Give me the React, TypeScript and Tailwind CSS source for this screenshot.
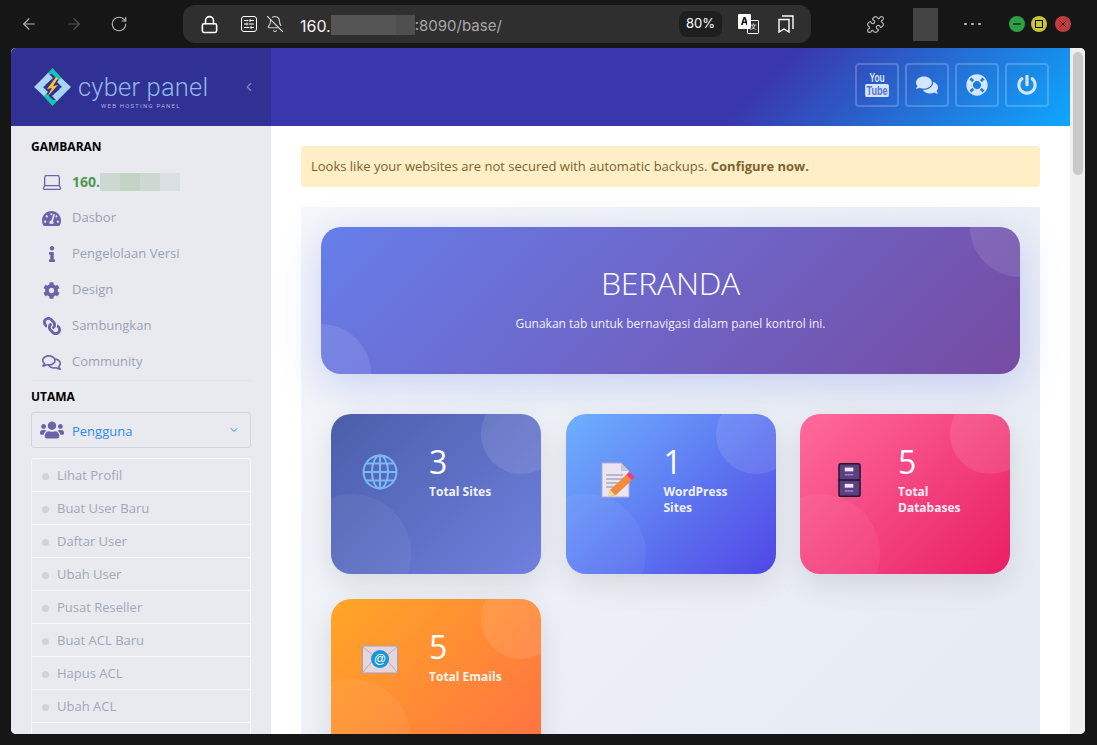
import { ArrowLeft, ArrowRight, RotateCw, Lock, BellOff, SlidersHorizontal, Puzzle, ChevronLeft, ChevronDown, Laptop, Minus, X } from 'lucide-react';
import { FaTachometerAlt, FaInfo, FaCog, FaLink, FaRegComments, FaUsers, FaComments, FaLifeRing, FaPowerOff } from 'react-icons/fa';

const overview = [
  { label: 'Dasbor', Icon: FaTachometerAlt, size: 'w-[19px] h-[19px]' },
  { label: 'Pengelolaan Versi', Icon: FaInfo, size: 'w-[16px] h-[16px]' },
  { label: 'Design', Icon: FaCog, size: 'w-[17px] h-[17px]' },
  { label: 'Sambungkan', Icon: FaLink, size: 'w-[18px] h-[18px] -scale-x-100' },
  { label: 'Community', Icon: FaRegComments, size: 'w-[19px] h-[19px]' },
];

const subItems = ['Lihat Profil', 'Buat User Baru', 'Daftar User', 'Ubah User', 'Pusat Reseller', 'Buat ACL Baru', 'Hapus ACL', 'Ubah ACL'];

function Logo() {
  return (
    <svg width="37" height="38" viewBox="0 0 37 38">
      <polygon points="12,7 18.5,0 36,19 30,25 25,20 31,19 18,6" fill="#17c4b0" />
      <polygon points="25,31 18.5,38 1,19 7,13 12,18 6,19 19,32" fill="#17c4b0" />
      <polygon points="0,19 14,5 19,10 9,19 14,24 10,28" fill="#a9d4f5" />
      <polygon points="37,19 23,33 18,28 28,19 23,14 27,10" fill="#a9d4f5" />
      <polygon points="22,9 13,21 18,20 13,29 24,17 19,18 24,10" fill="#fbc531" />
    </svg>
  );
}

function HeaderButton({ children }: { children: React.ReactNode }) {
  return <div className="w-[44px] h-[44px] rounded border-2 border-white/20 flex items-center justify-center text-[#d5e6fb]">{children}</div>;
}

function GlobeIcon() {
  return (
    <svg width="36" height="36" viewBox="0 0 36 36" fill="none" stroke="#79b9f4" strokeWidth="2">
      <circle cx="18" cy="18" r="16.500" />
      <ellipse cx="18" cy="18" rx="8" ry="16.500" />
      <path d="M18 1.500v33M1.500 18h33M4 9.500h28M4 26.500h28" />
    </svg>
  );
}

function DocIcon() {
  return (
    <svg width="36" height="36" viewBox="0 0 36 36" className="translate-x-[3px]">
      <path d="M2 1h19l8 8v26H2z" fill="#e9e6f2" stroke="#b3aec6" />
      <path d="M21 1v8h8z" fill="#c9c6d6" />
      <path d="M6 13h17M6 17h17M6 21h14M6 25h8" stroke="#8d8aa3" strokeWidth="1" />
      <path d="M8 35l2-7L26 13l6 5-16 15z" fill="#f28b3c" />
      <path d="M26 13l3-3 6 5-3 3z" fill="#ec3e78" />
      <path d="M8 35l2-7 5 5z" fill="#f6d7a7" />
    </svg>
  );
}

function CabinetIcon() {
  return (
    <svg width="23" height="36" viewBox="0 0 24 36">
      <rect x="1" y="1" width="22" height="34" rx="2" fill="#5b3f7e" stroke="#20152d" strokeWidth="1.5" />
      <path d="M1 18h22" stroke="#20152d" strokeWidth="1.5" />
      <rect x="7" y="5" width="9" height="4" fill="#ede5f2" />
      <rect x="7" y="22" width="9" height="4" fill="#ede5f2" />
      <path d="M7 12.500h9M7 29.500h9" stroke="#a779d6" strokeWidth="1.500" />
    </svg>
  );
}

function MailIcon() {
  return (
    <svg width="36" height="30" viewBox="0 0 36 30" className="translate-y-[3px]">
      <rect x="0.500" y="1" width="35" height="27" fill="#e6d5da" stroke="#a7a0ae" />
      <path d="M1 2l17 14L35 2M1 27l12-14M35 27L23 13" fill="none" stroke="#bca9b3" />
      <circle cx="18" cy="14" r="9" fill="#1796d8" />
      <text x="18" y="18" textAnchor="middle" fontSize="12" fill="#fff" fontFamily="Liberation Sans, sans-serif">@</text>
    </svg>
  );
}

function StatCard({ bg, icon, value, label }: { bg: string; icon: React.ReactNode; value: string; label: string }) {
  return (
    <div className={`relative h-[160px] rounded-[20px] overflow-hidden shadow-[0_10px_30px_rgba(0,0,0,0.1)] text-white ${bg}`}>
      <div className="absolute -top-[20px] -right-[20px] w-[80px] h-[80px] rounded-full bg-white/10" />
      <div className="absolute -bottom-[40px] -left-[40px] w-[120px] h-[120px] rounded-full bg-white/5" />
      <div className="relative flex items-center pt-[24px]">
        <div className="w-[98px] flex items-center justify-center shrink-0">{icon}</div>
        <div className="w-[86px] pb-[6px]">
          <div className="text-[32px] leading-[48px]">{value}</div>
          <div className="text-[12px] leading-[16px] font-bold opacity-90 mt-[-2px]">{label}</div>
        </div>
      </div>
    </div>
  );
}

export default function App() {
  return (
    <div className="w-[1097px] h-[745px] overflow-hidden bg-[#161616] font-['Open_Sans',sans-serif]">
      {/* Browser toolbar */}
      <div className="h-[48px] flex items-center relative font-['Inter',sans-serif]">
        <div className="w-[183px] pl-[20px] flex items-center gap-[27px]">
          <ArrowLeft className="w-[18px] h-[18px] text-[#b5b5b5]" strokeWidth={1.5} />
          <ArrowRight className="w-[18px] h-[18px] text-[#555]" strokeWidth={1.5} />
          <RotateCw className="w-[18px] h-[18px] text-[#b5b5b5]" strokeWidth={1.5} />
        </div>
        <div className="w-[628px] h-[38px] rounded-[12px] bg-[#2f2f2f] flex items-center text-white">
          <Lock className="w-[19px] h-[19px] ml-[17px]" strokeWidth={2} />
          <SlidersHorizontal className="w-[16px] h-[16px] ml-[22px] border border-white rounded-[3px] p-[1px]" />
          <BellOff className="w-[18px] h-[18px] ml-[9px] text-[#cfcfcf]" strokeWidth={1.5} />
          <span className="ml-[16px] pt-[4px] text-[16px] text-[#f2f2f2]">160.</span>
          <div className="flex ml-0 mt-[2px]">
            <div className="w-[65px] h-[20px] bg-[#555]" />
            <div className="w-[19px] h-[20px] bg-[#4f4f4f]" />
          </div>
          <span className="pt-[4px] text-[15px] text-[#a8a8a8]">:8090/base/</span>
          <div className="ml-auto mr-[16px] w-[43px] h-[26px] rounded-[8px] bg-[#1e1e1e] text-[13px] flex items-center justify-center">80%</div>
          <div className="relative w-[21px] h-[20px] mr-[19px]">
            <div className="absolute left-0 top-0 w-[13px] h-[15px] bg-white rounded-[1px] text-black text-[10px] leading-[15px] text-center font-bold">A</div>
            <div className="absolute right-0 bottom-0 w-[12px] h-[14px] border border-white rounded-[1px] text-[7px] leading-[12px] text-center">文</div>
          </div>
          <svg width="16" height="20" viewBox="0 0 16 20" className="mr-[17px]" fill="none" stroke="#fff" strokeWidth="1.400">
            <path d="M1 5.500h10V18l-5-3-5 3z" />
            <path d="M4 2h11v13" />
          </svg>
        </div>
        <Puzzle className="w-[19px] h-[19px] ml-[55px] text-[#b5b5b5]" strokeWidth={1.5} />
        <div className="w-[25px] h-[33px] ml-[28px] bg-[#444]" />
        <div className="ml-[26px] text-[#bdbdbd] flex gap-[4.500px]">
          <span className="w-[2.500px] h-[2.500px] rounded-full bg-current" />
          <span className="w-[2.500px] h-[2.500px] rounded-full bg-current" />
          <span className="w-[2.500px] h-[2.500px] rounded-full bg-current" />
        </div>
        <div className="ml-[28px] w-[16px] h-[16px] rounded-full bg-[#2f9e44] flex items-center justify-center"><Minus className="w-[12px] h-[12px] text-black" /></div>
        <div className="ml-[6px] w-[16px] h-[16px] rounded-full bg-[#c9c43a] flex items-center justify-center"><div className="w-[8px] h-[8px] border border-black" /></div>
        <div className="ml-[8px] w-[16px] h-[16px] rounded-full bg-[#c13c3c] flex items-center justify-center"><X className="w-[12px] h-[12px] text-[#3a1010]" /></div>
      </div>

      {/* Page */}
      <div className="ml-[11px] w-[1074px] h-[686px] rounded-[5px] overflow-hidden flex bg-white">
        {/* Sidebar */}
        <div className="w-[260px] shrink-0 bg-[#e9eaf0] overflow-hidden">
          <div className="h-[78px] bg-[#303193] flex items-center pl-[23px]">
            <Logo />
            <div className="ml-[7px] relative font-['Roboto',sans-serif] font-light text-[25.500px] leading-[30px] text-[#8fb9ec] tracking-[0.2px]">
              cyber panel
              <div className="absolute left-[23px] top-[30px] whitespace-nowrap text-[6px] leading-[8px] tracking-[1.200px] font-normal text-[#a7b0e0]">WEB HOSTING PANEL</div>
            </div>
            <ChevronLeft className="w-[14px] h-[14px] ml-[34px] text-[#8286c8]" />
          </div>
          <div className="px-[20px]">
            <div className="text-[12px] leading-[16px] font-bold text-black mt-[13px]">GAMBARAN</div>
            <div className="h-[36px] mt-[8px] flex items-center pt-[1px]">
              <div className="w-[41px] flex justify-center"><Laptop className="w-[22px] h-[22px] text-[#6a63a8]" strokeWidth={1.4} /></div>
              <span className="text-[14px] font-bold text-[#4e9a4e]">160.</span>
              <div className="flex">
                <div className="w-[20px] h-[18px] bg-[#cdd8d0]" />
                <div className="w-[20px] h-[18px] bg-[#c3d2c5]" />
                <div className="w-[20px] h-[18px] bg-[#cdd8d0]" />
                <div className="w-[20px] h-[18px] bg-[#d9dfe2]" />
              </div>
            </div>
            {overview.map(({ label, Icon, size }) => (
              <div key={label} className="h-[36px] flex items-center pt-[2px]">
                <div className="w-[41px] flex justify-center"><Icon className={`${size} text-[#6a63a8]`} /></div>
                <span className="text-[13px] text-[#98a3b5]">{label}</span>
              </div>
            ))}
            <div className="border-t border-[#dfe3ec] mt-[1px]" />
            <div className="text-[12px] leading-[16px] font-bold text-black mt-[8px]">UTAMA</div>
            <div className="h-[36px] mt-[7px] border border-[#cfd3dc] rounded-[3px] flex items-center">
              <div className="w-[40px] flex justify-center"><FaUsers className="w-[24px] h-[24px] text-[#6a63a8]" /></div>
              <span className="pt-[3px] text-[13px] text-[#2c8ae8]">Pengguna</span>
              <ChevronDown className="w-[12px] h-[12px] ml-auto mr-[10px] text-[#2c8ae8]" />
            </div>
            <div className="mt-[10px] border border-[#f5f6fa] rounded-[3px]">
              {subItems.map(item => (
                <div key={item} className="h-[33px] border-b border-[#f5f6fa] flex items-center pl-[10px] pt-[2px]">
                  <span className="w-[7px] h-[7px] rounded-full bg-[#ced3de]" />
                  <span className="ml-[8px] text-[13px] text-[#a0a8b8]">{item}</span>
                </div>
              ))}
              <div className="h-[33px]" />
            </div>
          </div>
        </div>

        {/* Main */}
        <div className="flex-1 min-w-0 overflow-hidden">
          <div className="h-[78px] bg-[linear-gradient(135deg,#3a36ab_0%,#3a36ab_60%,#0ea8ff_100%)] flex items-center justify-end gap-[6px] pr-[21px] pb-[4px]">
            <HeaderButton>
              <div className="flex flex-col items-center font-['Liberation_Sans',sans-serif] font-bold text-[12px] leading-[11px] scale-x-[0.7]">
                <span>You</span>
                <span className="bg-[#d5e6fb] text-[#5570d8] rounded-[2px] px-[2px] text-[13px] leading-[13px]">Tube</span>
              </div>
            </HeaderButton>
            <HeaderButton><FaComments className="w-[22px] h-[22px]" /></HeaderButton>
            <HeaderButton><FaLifeRing className="w-[22px] h-[22px]" /></HeaderButton>
            <HeaderButton><FaPowerOff className="w-[20px] h-[20px]" /></HeaderButton>
          </div>
          <div className="px-[30px] pt-[20px]">
            <div className="h-[41px] rounded-[3px] bg-[#ffeec6] flex items-center px-[10px] text-[13px] text-[#7b6330]">
              <span>Looks like your websites are not secured with automatic backups.&nbsp;<b className="font-bold">Configure now.</b></span>
            </div>
            <div className="mt-[20px] h-[600px] p-[20px] bg-[linear-gradient(135deg,#f5f7fa_0%,#e4e9f2_100%)]">
              <div className="relative h-[147px] rounded-[20px] overflow-hidden bg-[linear-gradient(135deg,#667eea_0%,#764ba2_100%)] shadow-[0_10px_40px_rgba(102,126,234,0.3)] flex flex-col items-center text-white">
                <div className="absolute -top-[50px] -right-[50px] w-[100px] h-[100px] rounded-full bg-white/10" />
                <div className="absolute -bottom-[50px] -left-[50px] w-[100px] h-[100px] rounded-full bg-white/10" />
                <div className="relative mt-[34px] text-[32px] leading-[44px] font-light tracking-[-0.3px]">BERANDA</div>
                <div className="relative mt-[11px] text-[12px] leading-[16px] opacity-90">Gunakan tab untuk bernavigasi dalam panel kontrol ini.</div>
              </div>
              <div className="mt-[40px] px-[10px] grid grid-cols-3 gap-x-[24.5px] gap-y-[25px]">
                <StatCard bg="bg-[linear-gradient(135deg,#4b5ea9_0%,#6f80de_100%)]" icon={<GlobeIcon />} value="3" label="Total Sites" />
                <StatCard bg="bg-[linear-gradient(135deg,#6fb1ff_0%,#4f46e5_100%)]" icon={<DocIcon />} value="1" label="WordPress Sites" />
                <StatCard bg="bg-[linear-gradient(135deg,#ff6b9d_0%,#e91e63_100%)]" icon={<CabinetIcon />} value="5" label="Total Databases" />
                <StatCard bg="bg-[linear-gradient(135deg,#ffa726_0%,#ff7043_100%)]" icon={<MailIcon />} value="5" label="Total Emails" />
              </div>
            </div>
          </div>
        </div>

        {/* Scrollbar */}
        <div className="w-[15px] shrink-0 bg-[#efefef] pt-[4px] pl-[3px]">
          <div className="w-[10px] h-[123px] rounded-full bg-[#c9c9c9]" />
        </div>
      </div>
    </div>
  );
}
